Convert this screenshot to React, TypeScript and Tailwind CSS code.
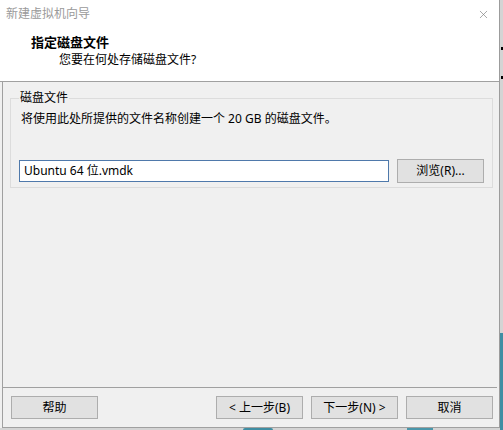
import { X } from "lucide-react";

const font = "font-['Noto_Sans','Noto_Sans_CJK_SC',sans-serif]";

function WinButton({ label, className = "" }: { label: string; className?: string }) {
  return (
    <button
      className={`h-[23px] w-[87px] border border-[#adadad] bg-[#e1e1e1] text-[12px] leading-none text-black ${className}`}
    >
      {label}
    </button>
  );
}

export default function App() {
  return (
    <div className={`relative w-[503px] h-[430px] overflow-hidden bg-[#d4d4d4] ${font}`}>
      {/* desktop bits peeking out behind the dialog */}
      <span className="absolute right-0 top-[47px] h-[3px] w-[2px] bg-black" />
      <span className="absolute right-0 top-[76px] h-[3px] w-[2px] bg-black" />
      <span className="absolute right-0 top-[333px] h-[97px] w-[3px] bg-[#3f8ea3]" />
      <span className="absolute bottom-0 left-[243px] h-[2px] w-[30px] rounded-t bg-[#3f8ea3]" />
      <span className="absolute bottom-0 left-[407px] h-[2px] w-[26px] bg-[#4a97ab]" />

      <div className="flex h-[428px] w-[500px] flex-col border-r border-[#9c9c9c] bg-[#f0f0f0]">
        {/* title bar + wizard header */}
        <div className="h-[81px] bg-white">
          <div className="flex h-[28px] items-center justify-between pl-[6px] pr-[9px]">
            <span className="text-[12px] text-[#9a9a9a]">新建虚拟机向导</span>
            <X className="h-[13px] w-[13px] text-[#7a7a7a]" strokeWidth={1.2} />
          </div>
          <div className="pl-[31px] pt-[5px]">
            <div className="text-[13px] font-bold leading-[18px] text-black">指定磁盘文件</div>
            <div className="pl-[28px] text-[12px] leading-[18px] text-black">您要在何处存储磁盘文件?</div>
          </div>
        </div>
        <div className="h-px bg-[#a0a0a0]" />

        <div className="ml-[2px] flex flex-1 flex-col border-b border-l border-[#a0a0a0]">
          <div className="flex-1 pl-[7px] pr-[7px] pt-[8px]">
            <fieldset className="border border-[#dcdcdc] px-[8px] pb-[4px]">
              <legend className="ml-[0px] px-[1px] text-[12px] leading-[16px] text-black">磁盘文件</legend>
              <div className="mt-[4px] pl-[2px] text-[12px] leading-[18px] text-black">
                将使用此处所提供的文件名称创建一个 20 GB 的磁盘文件。
              </div>
              <div className="mt-[31px] flex items-center gap-[8px]">
                <div className="flex h-[22px] w-[370px] items-center border border-[#4f79ab] bg-white pl-[4px] text-[12px] text-black">
                  Ubuntu 64 位.vmdk
                </div>
                <button className="h-[24px] w-[87px] border border-[#adadad] bg-[#e1e1e1] text-[12px] text-black">
                  浏览(R)...
                </button>
              </div>
            </fieldset>
          </div>

          <div className="mr-[2px] h-px bg-[#a0a0a0]" />
          <div className="flex h-[39px] items-start pl-[8px] pt-[8px]">
            <WinButton label="帮助" />
            <WinButton label="< 上一步(B)" className="ml-[118px]" />
            <WinButton label="下一步(N) >" className="ml-[8px]" />
            <WinButton label="取消" className="ml-[8px]" />
          </div>
        </div>
      </div>
    </div>
  );
}
